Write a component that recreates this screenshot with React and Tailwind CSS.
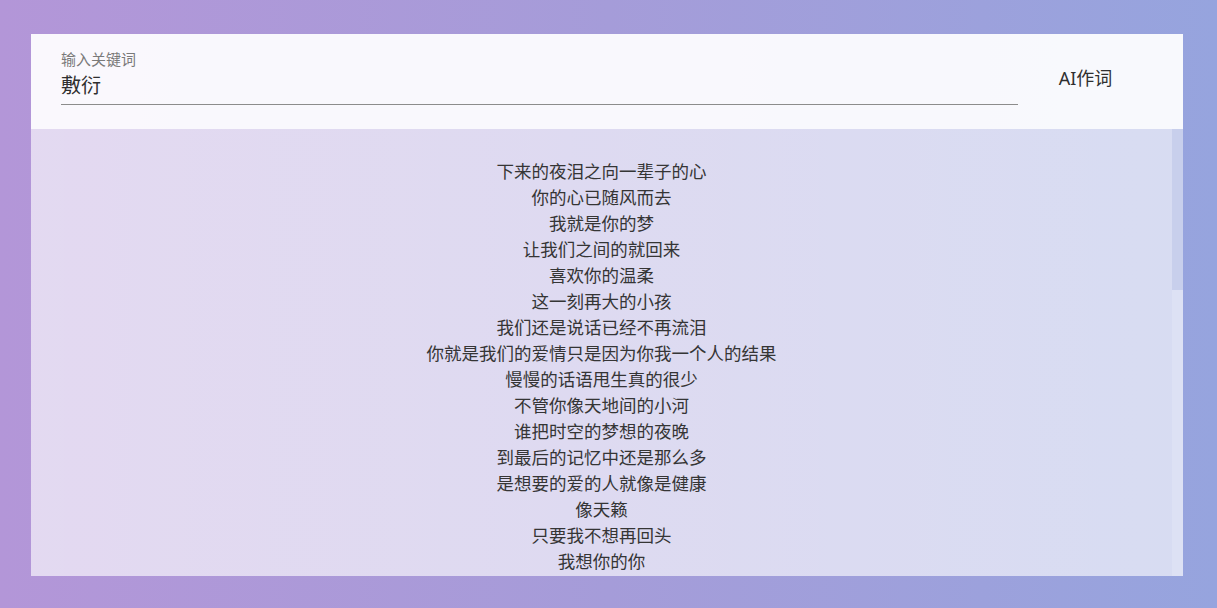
import { useState } from 'react';

const lyrics = [
  '下来的夜泪之向一辈子的心',
  '你的心已随风而去',
  '我就是你的梦',
  '让我们之间的就回来',
  '喜欢你的温柔',
  '这一刻再大的小孩',
  '我们还是说话已经不再流泪',
  '你就是我们的爱情只是因为你我一个人的结果',
  '慢慢的话语甩生真的很少',
  '不管你像天地间的小河',
  '谁把时空的梦想的夜晚',
  '到最后的记忆中还是那么多',
  '是想要的爱的人就像是健康',
  '像天籁',
  '只要我不想再回头',
  '我想你的你',
];

export default function App() {
  const [keyword, setKeyword] = useState('敷衍');

  return (
    <div
      className="w-full h-[608px] bg-gradient-to-r from-[#b396d8] via-[#a59cd9] to-[#96a4de] pl-[31px] pr-[34px] pt-[34px] pb-[32px] flex flex-col"
      style={{ fontFamily: '"Noto Sans", "Noto Sans CJK SC", sans-serif' }}
    >
      {/* 头部：关键词输入 + 按钮 */}
      <div className="bg-white/[0.93] flex items-center pl-[30px] pr-[30px] pt-[16px] pb-[24px]">
        <div className="flex-1 flex flex-col">
          <label className="text-[15px] leading-[18px] text-[#7a7a7a]">输入关键词</label>
          <input
            value={keyword}
            onChange={(e) => setKeyword(e.target.value)}
            className="mt-[4px] h-[28px] pb-[4px] text-[20px] text-[#2f2f2f] bg-transparent outline-none border-b border-[#8c8c8c] box-content"
          />
        </div>
        <button className="w-[135px] mt-[2px] text-[18px] text-[#2f2f2f] bg-transparent">AI作词</button>
      </div>

      {/* 歌词区域 */}
      <div className="flex-1 min-h-0 flex bg-gradient-to-r from-white/[0.64] to-white/[0.62]">
        <div className="flex-1 overflow-hidden pt-[29px]">
          {lyrics.map((line, i) => (
            <p key={i} className="text-center text-[17.5px] leading-[26px] text-[#353535]">
              {line}
            </p>
          ))}
        </div>
        <div className="w-[11px] bg-white/[0.15] flex flex-col">
          <div className="h-[161px] bg-[#aab3e2]/40"></div>
        </div>
      </div>
    </div>
  );
}
